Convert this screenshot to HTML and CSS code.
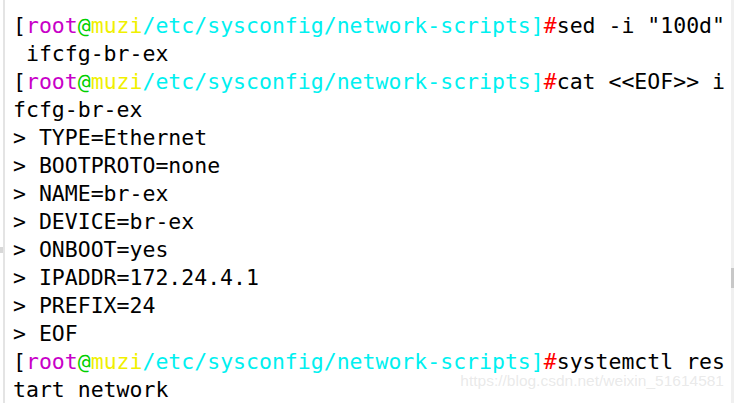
FILE: index.html
```html
<!DOCTYPE html>
<html>
<head>
<meta charset="utf-8">
<link rel="stylesheet" href="styles.css">
</head>
<body>
<div class="frame">
  <div class="gutter"><div class="band"></div></div>
  <div class="term">
<div class="line"><span class="br">[</span><span class="user">root</span><span class="at">@</span><span class="host">muzi</span><span class="path">/etc/sysconfig/network-scripts]</span><span class="hash">#</span>sed -i "100d"</div>
<div class="line"> ifcfg-br-ex</div>
<div class="line"><span class="br">[</span><span class="user">root</span><span class="at">@</span><span class="host">muzi</span><span class="path">/etc/sysconfig/network-scripts]</span><span class="hash">#</span>cat &lt;&lt;EOF&gt;&gt; i</div>
<div class="line">fcfg-br-ex</div>
<div class="line">&gt; TYPE=Ethernet</div>
<div class="line">&gt; BOOTPROTO=none</div>
<div class="line">&gt; NAME=br-ex</div>
<div class="line">&gt; DEVICE=br-ex</div>
<div class="line">&gt; ONBOOT=yes</div>
<div class="line">&gt; IPADDR=172.24.4.1</div>
<div class="line">&gt; PREFIX=24</div>
<div class="line">&gt; EOF</div>
<div class="line"><span class="br">[</span><span class="user">root</span><span class="at">@</span><span class="host">muzi</span><span class="path">/etc/sysconfig/network-scripts]</span><span class="hash">#</span>systemctl res</div>
<div class="line">tart network</div>
  </div>
  <div class="scroll"><div class="thumb"></div></div>
  <div class="watermark">https://blog.csdn.net/weixin_51614581</div>
</div>
</body>
</html>
```
FILE: styles.css
```css
html, body {
  margin: 0;
  padding: 0;
  background: #ffffff;
}
.frame {
  position: relative;
  display: flex;
  width: 734px;
  height: 403px;
  overflow: hidden;
}
.gutter {
  width: 3px;
  border-right: 2px solid #e4e4e4;
  flex: none;
  position: relative;
}
.band {
  position: absolute;
  left: 0;
  top: 247px;
  width: 3px;
  height: 6px;
  background: #d8d8d8;
}
.term {
  flex: 1;
  padding: 12px 0 0 8px;
  font-family: "DejaVu Sans Mono", "Liberation Mono", monospace;
  font-size: 21.5px;
  color: #000000;
}
.line {
  white-space: pre;
  height: 28px;
  line-height: 28px;
}
.user { color: #c800c8; }
.at { color: #00d000; }
.host { color: #f0f000; }
.path { color: #00f0f0; }
.hash { color: #ff0000; }
.scroll {
  width: 3px;
  flex: none;
  background: #f0f0f0;
  position: relative;
}
.thumb {
  position: absolute;
  left: 0;
  top: 268px;
  width: 3px;
  height: 20px;
  background: #c8c8c8;
}
.watermark {
  position: absolute;
  right: 10px;
  top: 372px;
  font-family: "Liberation Sans", Arial, sans-serif;
  font-size: 15.5px;
  color: rgba(200, 200, 200, 0.4);
}
```
